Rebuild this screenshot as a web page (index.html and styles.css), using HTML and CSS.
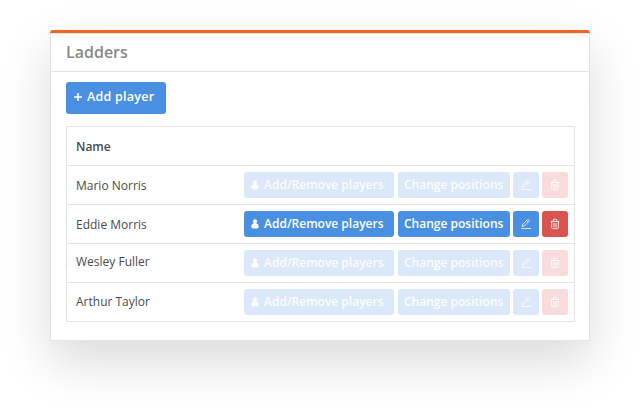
FILE: index.html
```html
<!DOCTYPE html>
<html lang="en">
<head>
<meta charset="utf-8">
<title>Ladders</title>
<link rel="stylesheet" href="styles.css">
</head>
<body>
<svg class="sprite" aria-hidden="true">
  <symbol id="user" viewBox="0 0 8 10"><circle cx="4" cy="2.300" r="2.100"/><path d="M4 4C2 4 .3 5.300.3 7.600c0 1.500.5 1.900 1.500 1.900h4.400c1 0 1.500-.4 1.500-1.900C7.700 5.300 6 4 4 4z"/></symbol>
  <symbol id="edit" viewBox="0 0 12 12"><path d="M1.200 10.500h9.800M2.200 8.500l.6-2.300L7.500 1.700q.6-.5 1.100 0l.5.5q.5.500 0 1L4.400 7.900zM6.700 2.600l1.500 1.500"/></symbol>
  <symbol id="trash" viewBox="0 0 10 12"><path d="M.7 3.500h8.600M3.300 3.300V2q0-.8.8-.8h1.800q.8 0 .8.800v1.300M1.700 3.700v6.100q0 .9.900.9h4.800q.9 0 .9-.9V3.700M4 5v4.500M6 5v4.500"/></symbol>
</svg>
<main class="card">
  <header class="card-header"><h1>Ladders</h1></header>
  <section class="card-body">
    <button class="btn btn-add"><svg class="plus" viewBox="0 0 8 8"><path d="M4 0v8M0 4h8"/></svg>Add player</button>
    <div class="table">
      <div class="row head">Name</div>
      <div class="row faded">
        <span class="name">Mario Norris</span>
        <div class="actions">
          <button class="btn players"><svg class="user"><use href="#user"/></svg>Add/Remove players</button>
          <button class="btn positions">Change positions</button>
          <button class="btn icon" aria-label="Edit"><svg class="edit"><use href="#edit"/></svg></button>
          <button class="btn icon danger" aria-label="Delete"><svg class="trash"><use href="#trash"/></svg></button>
        </div>
      </div>
      <div class="row">
        <span class="name">Eddie Morris</span>
        <div class="actions">
          <button class="btn players"><svg class="user"><use href="#user"/></svg>Add/Remove players</button>
          <button class="btn positions">Change positions</button>
          <button class="btn icon" aria-label="Edit"><svg class="edit"><use href="#edit"/></svg></button>
          <button class="btn icon danger" aria-label="Delete"><svg class="trash"><use href="#trash"/></svg></button>
        </div>
      </div>
      <div class="row faded">
        <span class="name raised">Wesley Fuller</span>
        <div class="actions">
          <button class="btn players"><svg class="user"><use href="#user"/></svg>Add/Remove players</button>
          <button class="btn positions">Change positions</button>
          <button class="btn icon" aria-label="Edit"><svg class="edit"><use href="#edit"/></svg></button>
          <button class="btn icon danger" aria-label="Delete"><svg class="trash"><use href="#trash"/></svg></button>
        </div>
      </div>
      <div class="row faded">
        <span class="name">Arthur Taylor</span>
        <div class="actions">
          <button class="btn players"><svg class="user"><use href="#user"/></svg>Add/Remove players</button>
          <button class="btn positions">Change positions</button>
          <button class="btn icon" aria-label="Edit"><svg class="edit"><use href="#edit"/></svg></button>
          <button class="btn icon danger" aria-label="Delete"><svg class="trash"><use href="#trash"/></svg></button>
        </div>
      </div>
    </div>
  </section>
</main>
</body>
</html>
```
FILE: styles.css
```css
* { box-sizing: border-box; }
body {
  margin: 0;
  padding: 30px 50px 0;
  height: 411px;
  overflow: hidden;
  background: #fff;
  color: #4a4a4a;
  font: 12px/18px "Open Sans", sans-serif;
}
.sprite { display: none; }
.card {
  height: 311px;
  border-radius: 3px 3px 0 0;
  background: #fff;
  box-shadow: 0 20px 50px rgba(0, 0, 0, .15);
}
.card::before {
  content: "";
  display: block;
  height: 3px;
  border-radius: 3px 3px 0 0;
  background: #f26522;
}
.card-header {
  height: 39px;
  padding: 7px 15px 0;
  border: 1px solid #e4e4e4;
}
h1 {
  margin: 0;
  font-size: 16px;
  line-height: 22px;
  font-weight: 600;
  color: #888;
}
.card-body {
  height: 269px;
  padding: 10px 14px 0 15px;
  border: 1px solid #e4e4e4;
  border-top: 0;
}
.btn {
  display: flex;
  align-items: center;
  height: 26px;
  padding: 0;
  border: 0;
  border-radius: 3px;
  background: #4990e2;
  color: #fff;
  font: 600 12px/18px "Open Sans", sans-serif;
  white-space: nowrap;
}
.btn-add {
  width: 100px;
  height: 32px;
  padding: 0 0 3px 8px;
  gap: 5px;
  font-size: 12.500px;
  letter-spacing: .25px;
}
.plus { width: 8px; height: 8px; stroke: #fff; stroke-width: 1.600; }
.table {
  height: 196px;
  margin-top: 12px;
  border: 1px solid #e4e4e4;
}
.row {
  display: flex;
  justify-content: space-between;
  align-items: center;
  height: 39px;
  padding: 0 6px 0 9px;
  border-bottom: 1px solid #e4e4e4;
}
.row:last-child { height: 38px; border-bottom: 0; }
.head { font-weight: 600; padding-top: 2px; }
.name { padding-top: 1px; }
.raised { padding: 0 0 3px; }
.row:last-child .name { padding: 0 0 1px; }
.actions { display: flex; gap: 3px; }
.faded .btn { background: #dbe8f9; color: rgba(255, 255, 255, .95); }
.faded .danger { background: #f8dcdc; }
.players { width: 150px; margin-right: 1px; padding-left: 7px; gap: 5px; }
.positions { width: 112px; padding-left: 6px; }
.icon { width: 26px; justify-content: center; }
.danger { background: #d9534f; }
.user { width: 8px; height: 10px; fill: currentColor; }
.edit { width: 12px; height: 12px; fill: none; stroke: currentColor; stroke-width: .8; }
.trash { width: 10px; height: 12px; fill: none; stroke: currentColor; stroke-width: .9; }
```
